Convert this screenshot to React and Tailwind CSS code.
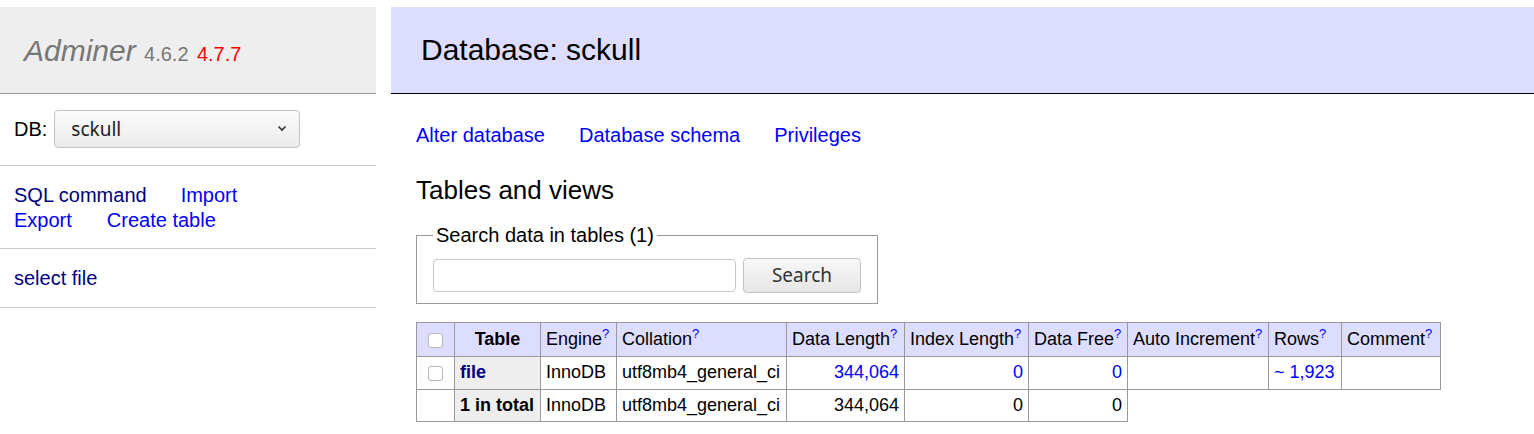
const Q = () => (
  <sup className="text-[13px] text-[#00f]">?</sup>
);

const Box = () => (
  <span className="inline-block w-[15px] h-[15px] border border-[#b8b8b8] rounded-[3px] bg-white align-middle" />
);

export default function App() {
  const cell = "border border-[#999] px-[5px] py-0 whitespace-nowrap";
  return (
    <div className="w-[1534px] h-[434px] overflow-hidden bg-white pt-[7px] flex font-['Liberation_Sans',Arial,sans-serif] text-[20px] leading-[25px] text-black">
      <aside className="w-[376px] shrink-0">
        <h1 className="h-[87px] bg-[#eee] border-b border-[#999] pl-[24px] pt-[25px] text-[30px] leading-[37.5px] text-[#777] font-normal">
          <span className="italic">Adminer</span>{" "}
          <span className="text-[20px] leading-none">4.6.2</span>{" "}
          <span className="text-[20px] leading-none text-[#f00]">4.7.7</span>
        </h1>
        <div className="pl-[14px] pt-[16px] pb-[17px] border-b border-[#ccc] flex items-center">
          <span className="mr-[7px]">DB:</span>
          <div className="w-[246px] h-[38px] border border-[#c4c4c4] rounded-[4px] bg-gradient-to-b from-[#fafafa] to-[#ebebeb] flex items-center pl-[16px] pr-[12px] font-['Noto_Sans',sans-serif] text-[19px] text-[#222]">
            <span className="flex-1">sckull</span>
            <svg width="10" height="8" viewBox="0 0 10 8" className="mt-[-2px]">
              <path d="M1.5 2.5 L5 6 L8.5 2.5" fill="none" stroke="#333" strokeWidth="1.6" />
            </svg>
          </div>
        </div>
        <div className="pl-[14px] pt-[17px] pb-[15px] border-b border-[#ccc]">
          <div>
            <a className="text-[#000080] mr-[34px]">SQL command</a>
            <a className="text-[#00f]">Import</a>
          </div>
          <div>
            <a className="text-[#00f] mr-[35px]">Export</a>
            <a className="text-[#00f]">Create table</a>
          </div>
        </div>
        <div className="pl-[14px] pt-[17px] pb-[16px] border-b border-[#ccc]">
          <a className="text-[#000080]">select file</a>
        </div>
      </aside>
      <main className="ml-[15px] flex-1">
        <h2 className="h-[87px] bg-[#ddf] border-b border-black pl-[30px] pt-[24px] text-[30px] leading-[37.5px] font-normal">
          Database: sckull
        </h2>
        <div className="pl-[25px]">
          <div className="mt-[29px] flex gap-[34px] text-[#00f]">
            <a>Alter database</a>
            <a>Database schema</a>
            <a>Privileges</a>
          </div>
          <h3 className="mt-[26px] text-[26px] leading-[32.5px] font-normal">Tables and views</h3>
          <fieldset className="mt-[16px] w-[462px] border border-[#999] px-[16px] pt-[10px] pb-[10px]">
            <legend className="px-[3px]">Search data in tables (1)</legend>
            <div className="flex items-center gap-[7px]">
              <div className="w-[303px] h-[33px] border border-[#c8c8c8] rounded-[4px] bg-white" />
              <div className="w-[118px] h-[35px] border border-[#c2c2c2] rounded-[4px] bg-gradient-to-b from-[#f8f8f8] to-[#e6e6e6] flex items-center justify-center font-['Noto_Sans',sans-serif] text-[19px] text-[#333]">
                Search
              </div>
            </div>
          </fieldset>
          <table className="mt-[18px] border-collapse text-[18px] leading-[22.5px]">
            <thead>
              <tr className="h-[34px] bg-[#ddf]">
                <td className={`${cell} w-[38px] text-center`}><Box /></td>
                <th className={`${cell} w-[86px] text-center font-bold`}>Table</th>
                <td className={`${cell} w-[76px]`}>Engine<Q /></td>
                <td className={`${cell} w-[170px]`}>Collation<Q /></td>
                <td className={`${cell} w-[118px]`}>Data Length<Q /></td>
                <td className={`${cell} w-[124px]`}>Index Length<Q /></td>
                <td className={`${cell} w-[99px]`}>Data Free<Q /></td>
                <td className={`${cell} w-[141px]`}>Auto Increment<Q /></td>
                <td className={`${cell} w-[73px]`}>Rows<Q /></td>
                <td className={`${cell} w-[99px]`}>Comment<Q /></td>
              </tr>
            </thead>
            <tbody>
              <tr className="h-[33px]">
                <td className={`${cell} text-center`}><Box /></td>
                <th className={`${cell} bg-[#eee] text-left font-bold text-[#000080]`}>file</th>
                <td className={cell}>InnoDB</td>
                <td className={cell}>utf8mb4_general_ci</td>
                <td className={`${cell} text-right text-[#00f]`}>344,064</td>
                <td className={`${cell} text-right text-[#00f]`}>0</td>
                <td className={`${cell} text-right text-[#00f]`}>0</td>
                <td className={cell}></td>
                <td className={`${cell} text-[#00f]`}>~ 1,923</td>
                <td className={cell}></td>
              </tr>
              <tr className="h-[32px]">
                <td className={cell}></td>
                <th className={`${cell} bg-[#eee] text-left font-bold`}>1 in total</th>
                <td className={cell}>InnoDB</td>
                <td className={cell}>utf8mb4_general_ci</td>
                <td className={`${cell} text-right`}>344,064</td>
                <td className={`${cell} text-right`}>0</td>
                <td className={`${cell} text-right`}>0</td>
              </tr>
            </tbody>
          </table>
        </div>
      </main>
    </div>
  );
}
